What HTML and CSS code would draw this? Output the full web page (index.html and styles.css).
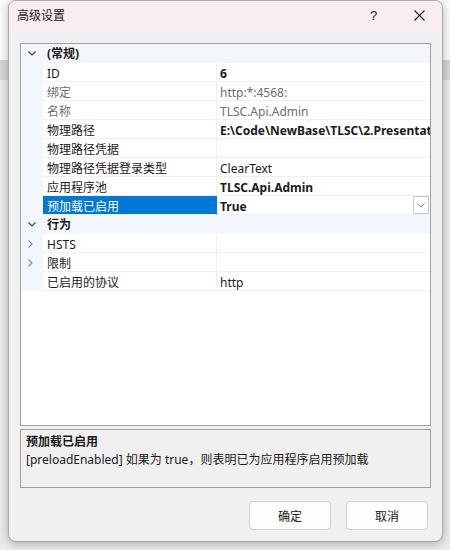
FILE: index.html
```html
<!DOCTYPE html>
<html lang="zh-CN">
<head>
<meta charset="utf-8">
<title>高级设置</title>
<link rel="stylesheet" href="styles.css">
</head>
<body>
<div class="backdrop">
  <div class="window">
    <div class="titlebar">
      <span class="title">高级设置</span>
      <span class="help">?</span>
      <svg class="close" width="11" height="11" viewBox="0 0 11 11"><path d="M0.5 0.5 L10.5 10.5 M10.5 0.5 L0.5 10.5" stroke="#1a1a1a" stroke-width="1.1" fill="none"/></svg>
    </div>
    <div class="content">
      <div class="grid">
        <div class="row cat">
          <span class="gut"><svg width="8" height="5" viewBox="0 0 8 5"><path d="M0.5 0.5 L4 4 L7.5 0.5" stroke="#444" stroke-width="1.2" fill="none"/></svg></span>
          <span class="catname">(常规)</span>
        </div>
        <div class="row"><span class="gut"></span><span class="name">ID</span><span class="val b">6</span></div>
        <div class="row dim"><span class="gut"></span><span class="name">绑定</span><span class="val">http:*:4568:</span></div>
        <div class="row dim"><span class="gut"></span><span class="name">名称</span><span class="val">TLSC.Api.Admin</span></div>
        <div class="row"><span class="gut"></span><span class="name">物理路径</span><span class="val b">E:\Code\NewBase\TLSC\2.Presentation\TLSC.Api.Admin</span></div>
        <div class="row"><span class="gut"></span><span class="name">物理路径凭据</span><span class="val"></span></div>
        <div class="row"><span class="gut"></span><span class="name">物理路径凭据登录类型</span><span class="val">ClearText</span></div>
        <div class="row"><span class="gut"></span><span class="name">应用程序池</span><span class="val b">TLSC.Api.Admin</span></div>
        <div class="row sel"><span class="gut"></span><span class="name">预加载已启用</span><span class="val b">True<span class="dd"><svg width="8" height="5" viewBox="0 0 8 5"><path d="M0.5 0.5 L4 4 L7.5 0.5" stroke="#777" stroke-width="1" fill="none"/></svg></span></span></div>
        <div class="row cat">
          <span class="gut"><svg width="8" height="5" viewBox="0 0 8 5"><path d="M0.5 0.5 L4 4 L7.5 0.5" stroke="#444" stroke-width="1.2" fill="none"/></svg></span>
          <span class="catname">行为</span>
        </div>
        <div class="row"><span class="gut"><svg width="5" height="8" viewBox="0 0 5 8"><path d="M0.5 0.5 L4 4 L0.5 7.5" stroke="#888" stroke-width="1.1" fill="none"/></svg></span><span class="name">HSTS</span><span class="val"></span></div>
        <div class="row"><span class="gut"><svg width="5" height="8" viewBox="0 0 5 8"><path d="M0.5 0.5 L4 4 L0.5 7.5" stroke="#888" stroke-width="1.1" fill="none"/></svg></span><span class="name">限制</span><span class="val"></span></div>
        <div class="row"><span class="gut"></span><span class="name">已启用的协议</span><span class="val">http</span></div>
      </div>
      <div class="desc">
        <div class="desc-title">预加载已启用</div>
        <div class="desc-text">[preloadEnabled] 如果为 true，则表明已为应用程序启用预加载</div>
      </div>
      <div class="buttons">
        <button class="btn">确定</button>
        <button class="btn">取消</button>
      </div>
    </div>
  </div>
</div>
</body>
</html>
```
FILE: styles.css
```css
* { box-sizing: border-box; }
html, body { margin: 0; padding: 0; }
body {
  width: 450px;
  height: 550px;
  overflow: hidden;
  font-family: "Noto Sans", "Noto Sans CJK SC", sans-serif;
  font-size: 12px;
  color: #1a1a1a;
  background: linear-gradient(to bottom, #fbfbfb 0, #fbfbfb 60px, #d6d6d6 60px, #d6d6d6 80px, #ebebeb 80px);
}
.backdrop {
  padding-left: 8px;
}
.window {
  width: 435px;
  height: 542px;
  border: 1px solid #a9a9a9;
  border-radius: 8px;
  background: #f0f0f0;
  box-shadow: 0 2px 10px rgba(0,0,0,0.28);
  overflow: hidden;
  display: flex;
  flex-direction: column;
}
.titlebar {
  height: 30px;
  flex: none;
  background: #f8eef2;
  display: flex;
  align-items: center;
  padding-left: 8px;
}
.title {
  flex: 1;
  font-size: 12px;
  line-height: 14px;
  margin-top: -1px;
}
.help {
  font-size: 13px;
  width: 12px;
  margin-right: 32px;
  margin-top: -1px;
  font-family: "Liberation Sans", sans-serif;
}
.close {
  margin-right: 17px;
  margin-top: -1px;
}
.content {
  flex: 1;
  padding: 12px 11px 0 11px;
  display: flex;
  flex-direction: column;
}
.grid {
  height: 383px;
  border: 1px solid #a0a0a0;
  background: #fff;
  overflow: hidden;
}
.row {
  display: grid;
  grid-template-columns: 22px 174px 1fr;
  height: 19px;
  line-height: 17px;
}
.gut {
  background: #f3f6fb;
  display: flex;
  align-items: center;
  padding-left: 7px;
  height: 19px;
}
.name {
  padding-left: 4px;
  padding-top: 2px;
  border-bottom: 1px solid #f0f0f0;
  border-right: 1px solid #f0f0f0;
  white-space: nowrap;
  overflow: hidden;
}
.val {
  padding-left: 3px;
  padding-top: 2px;
  border-bottom: 1px solid #f0f0f0;
  white-space: nowrap;
  overflow: hidden;
  position: relative;
}
.b { font-weight: bold; }
.dim .name, .dim .val { color: #6d6d6d; }
.sel .name {
  background: #0078d7;
  color: #fff;
  border-right-color: #0078d7;
}
.cat {
  background: #f3f6fb;
  grid-template-columns: 22px 1fr;
}
.catname {
  font-weight: bold;
  padding-left: 4px;
  padding-top: 1px;
}
.dd {
  position: absolute;
  right: 1px;
  top: 0;
  width: 16px;
  height: 18px;
  border: 1px solid #c8c8c8;
  background: #fff;
  display: flex;
  align-items: center;
  justify-content: center;
}
.desc {
  margin-top: 3px;
  height: 59px;
  border: 1px solid #a0a0a0;
  background: #f0f0f0;
  padding: 3px 5px 0 5px;
}
.desc-title {
  font-weight: bold;
  line-height: 18px;
}
.desc-text {
  line-height: 18px;
  margin-top: 0;
}
.buttons {
  margin-top: 13px;
  display: flex;
  justify-content: flex-end;
  gap: 15px;
  padding-right: 3px;
}
.btn {
  width: 82px;
  height: 29px;
  border: 1px solid #d0d0d0;
  border-radius: 4px;
  background: #fdfdfd;
  font-family: "Noto Sans", "Noto Sans CJK SC", sans-serif;
  font-size: 12px;
  color: #1a1a1a;
  padding: 0;
}
```
